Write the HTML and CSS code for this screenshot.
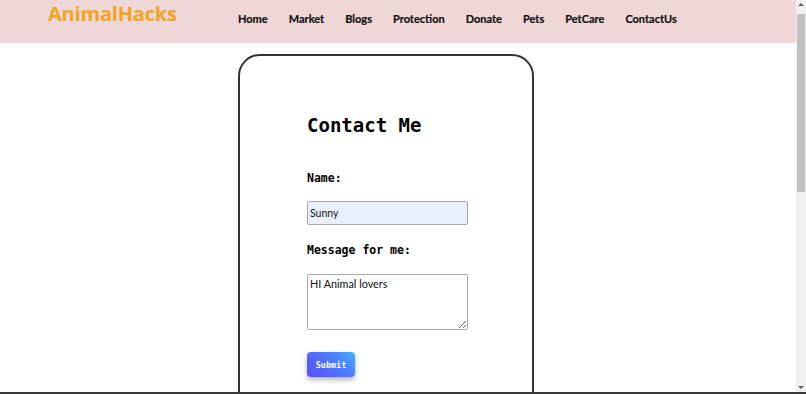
FILE: index.html
```html
<!DOCTYPE html>
<html lang="en">
<head>
<meta charset="utf-8">
<title>AnimalHacks - Contact</title>
<link rel="stylesheet" href="styles.css">
</head>
<body>
<header class="topbar">
  <div class="logo">AnimalHacks</div>
  <nav class="nav">
    <a href="#">Home</a>
    <a href="#">Market</a>
    <a href="#">Blogs</a>
    <a href="#">Protection</a>
    <a href="#">Donate</a>
    <a href="#">Pets</a>
    <a href="#">PetCare</a>
    <a href="#">ContactUs</a>
  </nav>
</header>
<main class="page">
  <form class="card">
    <h1 class="title">Contact Me</h1>
    <label class="label" for="name">Name:</label>
    <input class="field" id="name" type="text" value="Sunny">
    <label class="label label-msg" for="msg">Message for me:</label>
    <textarea class="area" id="msg">HI Animal lovers</textarea>
    <button class="submit" type="button">Submit</button>
  </form>
</main>
<div class="scrollbar">
  <span class="arrow arrow-up"></span>
  <span class="thumb"></span>
  <span class="arrow arrow-down"></span>
</div>
<div class="frame-edge"></div>
</body>
</html>
```
FILE: styles.css
```css
html, body {
  margin: 0;
  padding: 0;
  background: #ffffff;
}
body {
  font-family: "Open Sans", "Noto Sans", sans-serif;
  color: #000;
}
.topbar {
  height: 43px;
  background: #efd7d7;
  display: flex;
  align-items: flex-start;
  padding-left: 48px;
}
.logo {
  width: 190px;
  font-weight: 700;
  font-size: 20px;
  line-height: 28px;
  color: #f6a31e;
  letter-spacing: -0.2px;
}
.nav {
  display: flex;
  gap: 21px;
  padding-top: 11px;
}
.nav a {
  font-family: Lato, "Open Sans", sans-serif;
  font-weight: 700;
  font-size: 11px;
  line-height: 16px;
  color: #111;
  text-decoration: none;
  -webkit-text-stroke: 0.2px #111;
}
.page {
  padding: 11px 0 0 238px;
}
.card {
  box-sizing: border-box;
  width: 296px;
  height: 760px;
  border: 2px solid #333;
  border-radius: 22px;
  padding: 57px 0 0 67px;
  display: flex;
  flex-direction: column;
  align-items: flex-start;
}
.title {
  margin: 0;
  font-family: "DejaVu Sans Mono", monospace;
  font-weight: 700;
  font-size: 19px;
  line-height: 24px;
}
.label {
  margin-top: 34px;
  font-family: "DejaVu Sans Mono", monospace;
  font-weight: 700;
  font-size: 11.5px;
  line-height: 14px;
}
.label-msg {
  margin-top: 18px;
}
.field {
  box-sizing: border-box;
  margin: 16px 0 0;
  width: 161px;
  height: 24px;
  padding: 0 2px;
  border: 1px solid #a9a9a9;
  border-radius: 2px;
  background: #e8f0fe;
  font-family: Lato, sans-serif;
  font-size: 10.5px;
  color: #111;
}
.area {
  box-sizing: border-box;
  margin: 17px 0 0;
  width: 161px;
  height: 56px;
  padding: 2px 2px;
  border: 1px solid #a9a9a9;
  border-radius: 2px;
  font-family: Lato, sans-serif;
  font-size: 10.8px;
  line-height: 14px;
  color: #111;
  resize: both;
}
.submit {
  margin-top: 22px;
  width: 48px;
  height: 25px;
  border: none;
  border-radius: 4px;
  background: linear-gradient(45deg, #5a4cff 0%, #4d7bff 60%, #43b0ff 100%);
  box-shadow: 0 3px 5px rgba(40, 40, 120, 0.35);
  color: #fff;
  font-family: "DejaVu Sans Mono", monospace;
  font-size: 8.5px;
  font-weight: 700;
  padding: 0;
}
.scrollbar {
  position: fixed;
  top: 0;
  right: 0;
  bottom: 0;
  width: 10px;
  background: #f1f1f1;
  display: flex;
  flex-direction: column;
  align-items: center;
}
.arrow {
  width: 0;
  height: 0;
  border-left: 3px solid transparent;
  border-right: 3px solid transparent;
  margin: 3px 0;
}
.arrow-up {
  border-bottom: 3px solid #606060;
}
.arrow-down {
  border-top: 3px solid #606060;
  margin-top: auto;
  margin-bottom: 5px;
}
.thumb {
  width: 8px;
  height: 178px;
  margin-top: 5px;
  background: #c1c1c1;
}
.frame-edge {
  position: fixed;
  left: 0;
  right: 0;
  bottom: 0;
  height: 2px;
  background: #3a3a3a;
}
```
